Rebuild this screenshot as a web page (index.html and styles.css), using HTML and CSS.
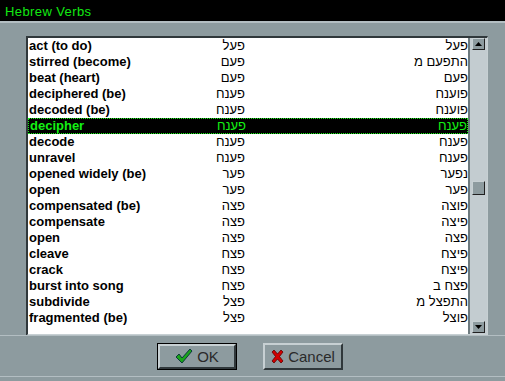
FILE: index.html
```html
<!DOCTYPE html>
<html lang="en">
<head>
	<meta charset="UTF-8">
	<title>Hebrew Verbs</title>
	<link rel="stylesheet" href="styles.css">
</head>
<body>
	<!-- 标题栏 -->
	<div class="titlebar">Hebrew Verbs</div>

	<div class="main">
		<!-- 列表框：左边是列表，右边是滚动条 -->
		<div class="listbox">
			<ul class="rows">
				<li><span class="en">act (to do)</span><span class="root">פעל</span><span class="form">פעל</span></li>
				<li><span class="en">stirred (become)</span><span class="root">פעם</span><span class="form">התפעם מ</span></li>
				<li><span class="en">beat (heart)</span><span class="root">פעם</span><span class="form">פעם</span></li>
				<li><span class="en">deciphered (be)</span><span class="root">פענח</span><span class="form">פוענח</span></li>
				<li><span class="en">decoded (be)</span><span class="root">פענח</span><span class="form">פוענח</span></li>
				<li class="active"><span class="en">decipher</span><span class="root">פענח</span><span class="form">פענח</span></li>
				<li><span class="en">decode</span><span class="root">פענח</span><span class="form">פענח</span></li>
				<li><span class="en">unravel</span><span class="root">פענח</span><span class="form">פענח</span></li>
				<li><span class="en">opened widely (be)</span><span class="root">פער</span><span class="form">נפער</span></li>
				<li><span class="en">open</span><span class="root">פער</span><span class="form">פער</span></li>
				<li><span class="en">compensated (be)</span><span class="root">פצה</span><span class="form">פוצה</span></li>
				<li><span class="en">compensate</span><span class="root">פצה</span><span class="form">פיצה</span></li>
				<li><span class="en">open</span><span class="root">פצה</span><span class="form">פצה</span></li>
				<li><span class="en">cleave</span><span class="root">פצח</span><span class="form">פיצח</span></li>
				<li><span class="en">crack</span><span class="root">פצח</span><span class="form">פיצח</span></li>
				<li><span class="en">burst into song</span><span class="root">פצח</span><span class="form">פצח ב</span></li>
				<li><span class="en">subdivide</span><span class="root">פצל</span><span class="form">התפצל מ</span></li>
				<li><span class="en">fragmented (be)</span><span class="root">פצל</span><span class="form">פוצל</span></li>
			</ul>
			<div class="scrollbar">
				<a href="javascript:;" class="sbtn">
					<svg width="7" height="4" viewBox="0 0 7 4"><path d="M3.5 0 L7 4 L0 4 Z" fill="#000"/></svg>
				</a>
				<div class="track">
					<div class="thumb"></div>
				</div>
				<a href="javascript:;" class="sbtn">
					<svg width="7" height="4" viewBox="0 0 7 4"><path d="M0 0 L7 0 L3.5 4 Z" fill="#000"/></svg>
				</a>
			</div>
		</div>
	</div>

	<!-- 按钮 -->
	<div class="footer">
		<a href="javascript:;" class="btn default">
			<svg width="18" height="16" viewBox="0 0 18 16">
				<path d="M1 9 L4 6 L7 10 L15 1 L17 3 L7 15 Z" fill="#1aa51a" stroke="#0a3a3a" stroke-width="1"/>
			</svg>
			OK
		</a>
		<a href="javascript:;" class="btn">
			<svg width="13" height="13" viewBox="0 0 13 13">
				<path d="M1 2 L3 0 L6.5 4 L10 0 L12 2 L8.5 6.5 L12 11 L10 13 L6.5 9 L3 13 L1 11 L4.5 6.5 Z" fill="#d00000" stroke="#600000" stroke-width="0.8"/>
			</svg>
			Cancel
		</a>
	</div>
</body>
</html>
```

FILE: styles.css
```css
*{
	margin: 0;padding: 0;
}
ul{
	list-style: none;
}
a{
	text-decoration: none;
	color: #202020;
}
body{
	width: 505px;
	height: 381px;
	background: #8d9b9f;
	font-family: "Liberation Sans", Arial, sans-serif;
	overflow: hidden;
}
.titlebar{
	height: 21px;
	background: #000000;
	border-bottom: 2px solid #b3bec2;
	color: #12e812;
	font: 13px/24px "Liberation Sans", sans-serif;
	padding-left: 5px;
	letter-spacing: 0.4px;
}
.main{
	padding: 13px 17px 0 26px;
	height: 299px;
}
.listbox{
	display: flex;
	height: 296px;
	border: 2px solid;
	border-color: #30383b #c7d0d3 #c7d0d3 #30383b;
	border-right: 1px solid #c7d0d3;
}
.rows{
	width: 440px;
	background: #ffffff;
	border-right: 2px solid #6d7a7e;
}
.rows li{
	display: grid;
	grid-template-columns: 150px 67px 1fr;
	height: 16px;
	font-size: 13px;
	line-height: 16px;
	color: #000000;
	box-sizing: border-box;
}
.rows li.active{
	background: #000000;
	color: #14f014;
	border: 1px dotted #14f014;
	line-height: 14px;
}
.en{
	font-weight: bold;
	padding-left: 1px;
}
.root,.form{
	direction: rtl;
	text-align: right;
}
.scrollbar{
	width: 17px;
	background: #c3ccd0;
	display: flex;
	flex-direction: column;
	align-items: center;
	padding-bottom: 1px;
}
.sbtn{
	width: 11px;
	height: 10px;
	background: #8d9b9f;
	border: 1px solid;
	border-color: #c7d0d3 #202020 #202020 #c7d0d3;
	display: flex;
	align-items: center;
	justify-content: center;
}
.track{
	flex: 1;
	width: 13px;
	padding-top: 131px;
}
.thumb{
	width: 11px;
	height: 12px;
	background: #8d9b9f;
	border: 1px solid;
	border-color: #c7d0d3 #202020 #202020 #c7d0d3;
}
.footer{
	height: 40px;
	border-top: 1px solid #b3bec2;
	border-bottom: 1px solid #b3bec2;
	display: flex;
	align-items: center;
	justify-content: center;
	gap: 26px;
	padding-right: 5px;
}
.btn{
	width: 76px;
	height: 23px;
	border: 2px solid;
	border-color: #c7d0d3 #30383b #30383b #c7d0d3;
	display: flex;
	align-items: center;
	justify-content: center;
	gap: 4px;
	font-size: 15px;
	color: #2a2a2a;
}
.btn.default{
	outline: 1px solid #000000;
	width: 74px;
	height: 21px;
	margin: 1px;
}
```
